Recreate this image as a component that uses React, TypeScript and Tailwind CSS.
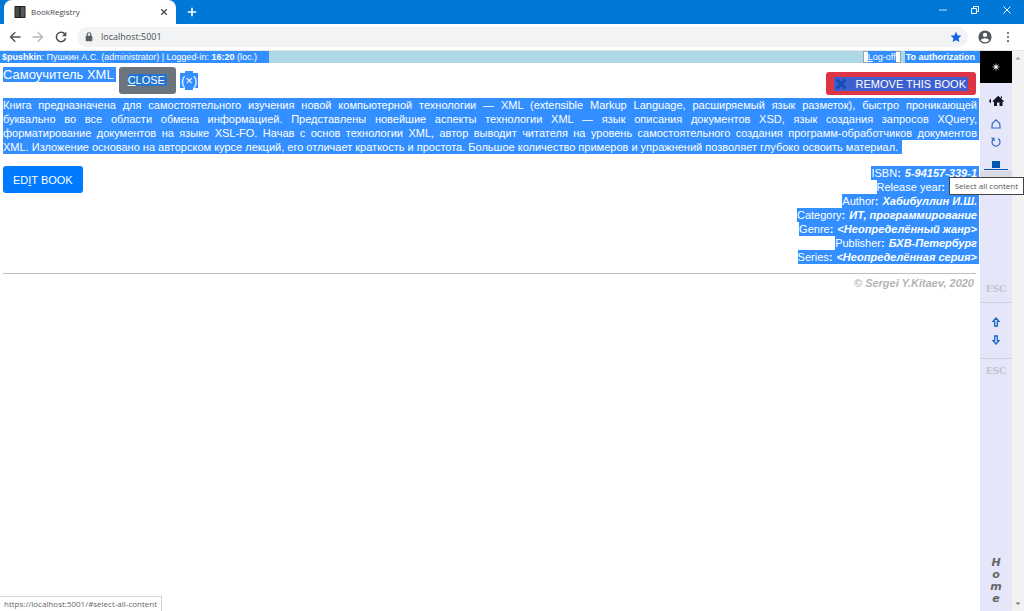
import type { ReactNode } from "react";

function TabStrip() {
  return (
    <div className="flex h-6 items-end bg-[#0078d7]">
      <div className="ml-1 flex h-6 w-[172px] items-center rounded-t-lg bg-white pr-1 pl-2.5">
        <svg className="h-3 w-3" viewBox="0 0 12 12" aria-hidden="true">
          <rect x="1" y="0.5" width="4.6" height="11" fill="#4b4b4b" stroke="#222" />
          <rect x="6.4" y="0.5" width="4.6" height="11" fill="#5b5b5b" stroke="#222" />
        </svg>
        <span className="ml-[5px] flex-1 font-['Open_Sans',sans-serif] text-[8px] text-[#45494d]">BookRegistry</span>
        <button aria-label="Close tab" className="flex h-4 w-4 items-center justify-center">
          <svg className="h-2 w-2" viewBox="0 0 8 8" stroke="#45494d" strokeWidth="1.3">
            <path d="M1.2 1.2l5.6 5.6M6.8 1.2L1.2 6.8" />
          </svg>
        </button>
      </div>
      <button aria-label="New tab" className="ml-2 flex h-6 w-4 items-center justify-center">
        <svg className="h-2.5 w-2.5" viewBox="0 0 10 10" stroke="#fff" strokeWidth="1.6">
          <path d="M5 0.8v8.4M0.8 5h8.4" />
        </svg>
      </button>
      <div className="mr-px ml-auto flex h-[19px] items-start">
        <button aria-label="Minimize" className="flex w-8 justify-center pt-px">
          <svg className="h-2 w-2" viewBox="0 0 10 10" stroke="#fff" fill="none">
            <path d="M0 5h10" />
          </svg>
        </button>
        <button aria-label="Restore" className="flex w-8 justify-center">
          <svg className="h-2.5 w-2.5" viewBox="0 0 10 10" stroke="#fff" fill="none">
            <path d="M1.5 3.5h5v5h-5zM3.5 3.5v-2h5v5h-2" />
          </svg>
        </button>
        <button aria-label="Close window" className="flex w-8 justify-center">
          <svg className="h-2.5 w-2.5" viewBox="0 0 10 10" stroke="#fff" fill="none">
            <path d="M1.5 1.5l7 7M8.5 1.5l-7 7" />
          </svg>
        </button>
      </div>
    </div>
  );
}

function AddressBar() {
  return (
    <div className="flex h-[27px] items-center border-b border-[#e4e6e8] bg-white pr-2.5 pl-2">
      <button aria-label="Back" className="flex w-[23px] pl-px">
        <svg className="h-3 w-3" viewBox="0 0 12 12" fill="none" stroke="#4d5156" strokeWidth="1.4">
          <path d="M11.5 6H1.5M6.3 1.2L1.5 6l4.8 4.8" />
        </svg>
      </button>
      <button aria-label="Forward" className="flex w-[23px] pl-px">
        <svg className="h-3 w-3" viewBox="0 0 12 12" fill="none" stroke="#b8babd" strokeWidth="1.4">
          <path d="M0.5 6h10M5.7 1.2L10.5 6l-4.8 4.8" />
        </svg>
      </button>
      <button aria-label="Reload" className="flex w-[23px] pl-px">
        <svg className="h-3 w-3" viewBox="0 0 12 12" fill="none" stroke="#4d5156" strokeWidth="1.5">
          <path d="M10.2 3.6A4.7 4.7 0 1 0 10.6 7.3" />
          <path d="M11.4 0.8v4.5H6.9z" fill="#4d5156" stroke="none" />
        </svg>
      </button>
      <div className="flex h-5 flex-1 items-center rounded-full bg-[#f1f3f4] pr-1.5 pl-2">
        <svg className="h-2.5 w-2" viewBox="0 0 8 10" aria-hidden="true">
          <rect x="0.7" y="3.8" width="6.6" height="5.4" rx="0.7" fill="#5a5e63" />
          <path d="M2.2 4V2.5a1.8 1.8 0 0 1 3.6 0V4" fill="none" stroke="#5a5e63" strokeWidth="1.1" />
        </svg>
        <input
          aria-label="Address"
          defaultValue="localhost:5001"
          className="ml-2 min-w-0 flex-1 bg-transparent font-['Open_Sans',sans-serif] text-[9px] text-[#4a4e52] outline-none"
        />
        <button aria-label="Bookmark" className="flex">
          <svg className="h-3 w-3" viewBox="0 0 12 12" fill="#1a66e0">
            <path d="M6 0.8l1.6 3.5 3.8.4-2.8 2.6.8 3.8L6 9.2l-3.4 1.9.8-3.8L.6 4.7l3.8-.4z" />
          </svg>
        </button>
      </div>
      <button aria-label="Profile" className="ml-2.5 flex">
        <svg className="h-3.5 w-3.5" viewBox="0 0 14 14">
          <circle cx="7" cy="7" r="6.6" fill="#54585d" />
          <circle cx="7" cy="4.9" r="2.1" fill="#fff" />
          <path d="M2.7 10a4.7 3 0 0 1 8.6 0a5.2 5.2 0 0 1-8.6 0z" fill="#fff" />
        </svg>
      </button>
      <button aria-label="Browser menu" className="ml-2.5 flex">
        <svg className="h-3 w-3" viewBox="0 0 12 12" fill="#5f6368">
          <circle cx="6" cy="1.8" r="1.1" />
          <circle cx="6" cy="6" r="1.1" />
          <circle cx="6" cy="10.2" r="1.1" />
        </svg>
      </button>
    </div>
  );
}

function StatusStrip() {
  return (
    <div className="flex h-3 items-center justify-between bg-[#add8e6] text-[9px] leading-3 text-white">
      <div className="h-3 bg-[#338fff] pr-3 pl-0.5">
        <b>$pushkin</b>: Пушкин А.С. (administrator) | Logged-in: <b>16:20</b> (loc.)
      </div>
      <div className="flex h-3">
        <button className="flex h-3 items-center border border-[#9aa5ab] bg-white px-1 leading-3">
          <span className="bg-[#338fff]"><u>L</u>og-off</span>
        </button>
        <a href="#authorization" className="ml-1 h-3 bg-[#338fff] pr-[5px] pl-px font-bold">To authorization</a>
      </div>
    </div>
  );
}

const description = [
  "Книга предназначена для самостоятельного изучения новой компьютерной технологии — XML (extensible Markup Language, расширяемый язык разметок), быстро проникающей",
  "буквально во все области обмена информацией. Представлены новейшие аспекты технологии XML — язык описания документов XSD, язык создания запросов XQuery,",
  "форматирование документов на языке XSL-FO. Начав с основ технологии XML, автор выводит читателя на уровень самостоятельного создания программ-обработчиков документов",
];

const details: [string, ReactNode][] = [
  ["ISBN", "5-94157-339-1"],
  ["Release year", <span className="block w-7" />],
  ["Author", "Хабибуллин И.Ш."],
  ["Category", "ИТ, программирование"],
  ["Genre", "<Неопределённый жанр>"],
  ["Publisher", "БХВ-Петербург"],
  ["Series", "<Неопределённая серия>"],
];

function BookPage() {
  return (
    <main className="min-w-0 flex-1">
      <StatusStrip />
      <div className="pr-px pl-[3px] text-[11px] leading-[14px]">
        <div className="flex items-start pt-1 pr-[3px]">
          <h1 className="bg-[#338fff] pr-0.5 text-[13px] leading-[15px] text-white">Самоучитель XML</h1>
          <button className="ml-[3px] h-[27px] rounded-[3px] bg-[#6c757d] px-[9px] pb-0.5 text-white">
            <span className="bg-[#2475d1] pr-0.5"><u>C</u>LOSE</span>
          </button>
          <a href="#close" aria-label="Close book" className="mt-1.5 ml-1 flex h-[15px] items-center bg-[#338fff] px-px text-[13px] leading-[15px] text-white">
            (<span className="bg-[#338fff] py-0.5">×</span>)
          </a>
          <button className="mt-[5px] ml-auto flex h-[23px] items-center rounded-[3px] bg-[#dc3545] px-2 text-white">
            <span className="flex items-center bg-[#3f5fd0] pr-0.5">
              <svg className="mr-2 h-3.5 w-3.5" viewBox="0 0 14 14" stroke="#1450b4" strokeWidth="3.2">
                <path d="M2.5 2.5l9 9M11.5 2.5l-9 9" />
              </svg>
              REMOVE THIS BOOK
            </span>
          </button>
        </div>
        <p className="pt-[3px] text-justify text-white">
          {description.map((line) => (
            <span key={line} className="block bg-[#338fff] pr-0.5 [text-align-last:justify]">{line} </span>
          ))}
          <span className="block w-fit bg-[#338fff] pr-1">
            XML. Изложение основано на авторском курсе лекций, его отличает краткость и простота. Большое количество примеров и упражнений позволяет глубоко освоить материал.
          </span>
        </p>
        <div className="flex items-start justify-between pt-3">
          <button className="h-[27px] rounded-[3px] bg-[#007bff] px-2.5 text-white">ED<u>I</u>T BOOK</button>
          <dl className="flex flex-col items-end text-white">
            {details.map(([label, value]) => (
              <div key={label} className="flex h-[14px] gap-1 bg-[#338fff] pr-0.5">
                <dt>{label}<b>:</b></dt>
                <dd className="font-bold italic">{value}</dd>
              </div>
            ))}
          </dl>
        </div>
        <footer className="mt-[9px] mr-[3px] border-t border-[#bfbfbf] pt-0.5 pr-0.5 text-right font-bold text-[#b5b5b5] italic">
          © Sergei Y.Kitaev, 2020
        </footer>
      </div>
    </main>
  );
}

function SideRail() {
  return (
    <nav aria-label="Page tools" className="flex w-8 flex-col items-stretch bg-[#e6e6fa]">
      <div className="flex h-8 items-center justify-center bg-black">
        <svg className="h-2 w-2" viewBox="0 0 8 8" stroke="#fff" strokeWidth="0.7">
          <path d="M4 0.5v7M0.5 4h7M1.5 1.5l5 5M6.5 1.5l-5 5" />
          <circle cx="4" cy="4" r="1.2" fill="#fff" />
        </svg>
      </div>
      <a href="#home" aria-label="Home" className="mt-3 flex justify-center">
        <svg className="h-3 w-4" viewBox="0 0 16 12" fill="#15151f">
          <path d="M3 3.5v5L0.8 6zM10.2 0.8L16 6.2l-.7.8-.8-.6V11h-3V7.5H9V11H6V6.4l-.8.6-.7-.8z M12.7 1.5H14v2.3l-1.3-1.2z" />
        </svg>
      </a>
      <a href="#start" aria-label="Start page" className="mt-3 flex justify-center">
        <svg className="h-2.5 w-2.5" viewBox="0 0 10 10" fill="none" stroke="#2c6cc4" strokeWidth="1.2">
          <path d="M5 0.9L1.3 4.6L0.9 9h8.2L8.7 4.6z" />
        </svg>
      </a>
      <a href="#reload" aria-label="Refresh" className="mt-2 flex justify-center">
        <svg className="h-2.5 w-2.5" viewBox="0 0 10 10" fill="none" stroke="#2c6cc4" strokeWidth="1.2">
          <path d="M2.6 1.9A4 4 0 1 0 7 1.6M0.4 1.4h2.6v2.6" />
        </svg>
      </a>
      <div className="relative mt-3.5 flex justify-center">
        <a href="#select-all-content" aria-label="Select all content" className="flex h-[9px] w-6 justify-center border-b border-[#0056b3]">
          <span className="h-[7px] w-2 bg-[#0056b3]" />
        </a>
        <div role="tooltip" className="absolute top-4 -right-3 flex h-[18px] items-center border border-[#444] bg-white px-[5px] font-['Open_Sans',sans-serif] text-[8px] whitespace-nowrap text-[#555]">
          Select all content
        </div>
      </div>
      <div className="mt-px h-[22px] bg-[#dadae2]" />
      <button className="mt-[89px] h-[21px] border-b border-[#cdcdde] pb-1.5 font-['DejaVu_Serif',serif] text-[9px] leading-3 font-bold text-[#c3c3cd]">ESC</button>
      <div className="flex h-14 flex-col items-center justify-center gap-2 border-b border-[#cdcdde]">
        <a href="#up" aria-label="Scroll up">
          <svg className="h-2.5 w-2" viewBox="0 0 8 10" fill="none" stroke="#1668c7" strokeWidth="1.3">
            <path d="M4 1L1 4.3h1.7V9h2.6V4.3H7z" />
          </svg>
        </a>
        <a href="#down" aria-label="Scroll down">
          <svg className="h-2.5 w-2" viewBox="0 0 8 10" fill="none" stroke="#1668c7" strokeWidth="1.3">
            <path d="M4 9L1 5.7h1.7V1h2.6v4.7H7z" />
          </svg>
        </a>
      </div>
      <button className="mt-1.5 font-['DejaVu_Serif',serif] text-[9px] leading-3 font-bold text-[#c3c3cd]">ESC</button>
      <a href="#top" aria-label="Home" className="mt-auto mb-1.5 flex flex-col items-center font-['DejaVu_Sans',sans-serif] text-[11px] leading-3 font-bold text-[#666] italic">
        <span>H</span><span>o</span><span>m</span><span>e</span>
      </a>
    </nav>
  );
}

export default function App() {
  return (
    <div className="relative flex h-screen flex-col overflow-hidden bg-white font-['Liberation_Sans',Arial,sans-serif]">
      <TabStrip />
      <AddressBar />
      <div className="flex min-h-0 flex-1">
        <BookPage />
        <SideRail />
        <div className="flex w-3 flex-col items-center justify-between bg-[#f2f2f2] py-1" aria-hidden="true">
          <svg className="h-1.5 w-1.5" viewBox="0 0 6 6" fill="#999"><path d="M0.5 4.5L3 2l2.5 2.5z" /></svg>
          <svg className="h-1.5 w-1.5" viewBox="0 0 6 6" fill="#777"><path d="M0.5 1.5L3 4l2.5-2.5z" /></svg>
        </div>
      </div>
      <div className="absolute bottom-0 left-0 flex h-[15px] items-center border-t border-r border-[#d4d4d4] bg-white pr-1 pl-1 font-['Open_Sans',sans-serif] text-[8px] text-[#666]">
        https://localhost:5001/#select-all-content
      </div>
    </div>
  );
}
